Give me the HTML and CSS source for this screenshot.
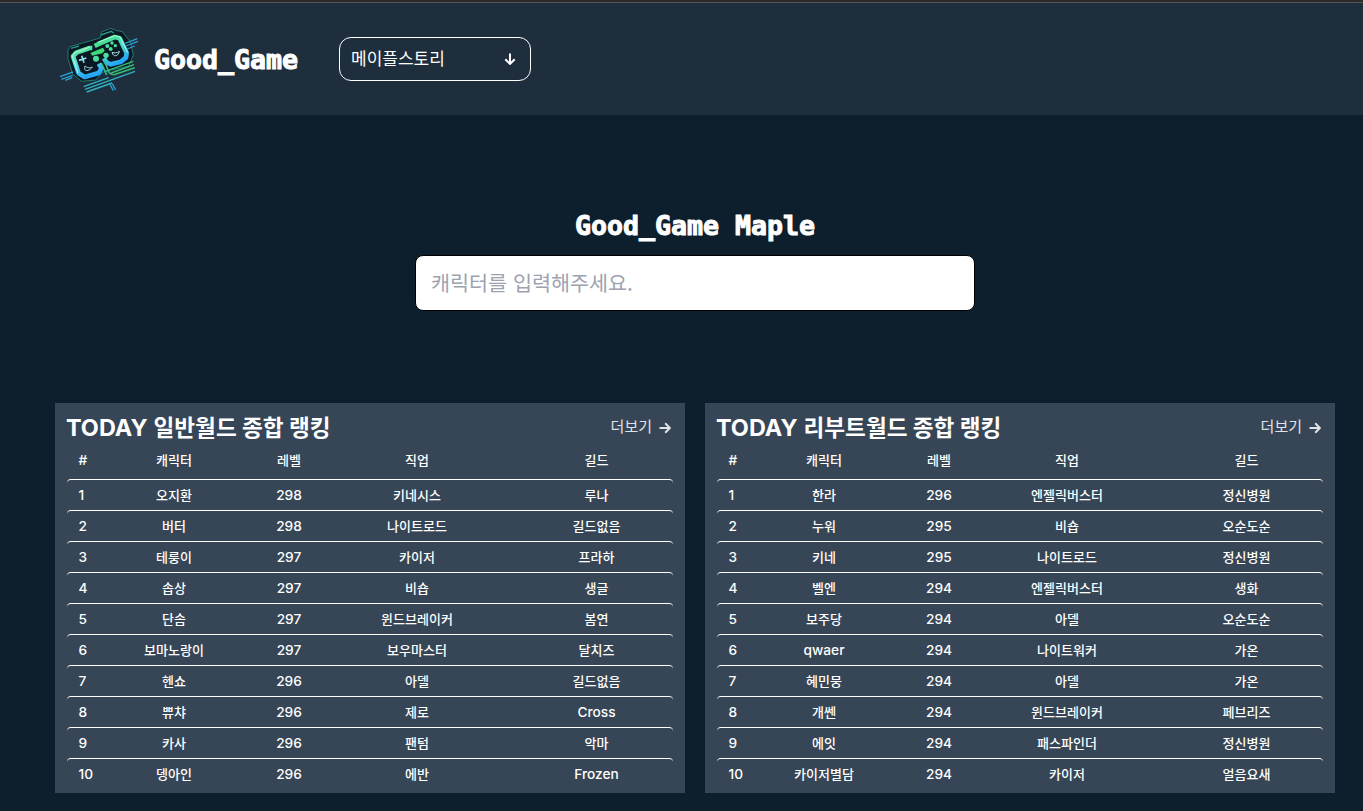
FILE: index.html
```
<!DOCTYPE html>
<html lang="ko">
<head>
<meta charset="utf-8">
<title>Good_Game Maple</title>
<link rel="stylesheet" href="styles.css">
</head>
<body>
<header class="header">
  <svg class="logo" viewBox="0 0 300 240" fill="none">
    <defs>
      <linearGradient id="left" gradientUnits="userSpaceOnUse" x1="90" y1="85" x2="115" y2="170">
        <stop offset="0" stop-color="#55e391"/>
        <stop offset="0.45" stop-color="#5be3dc"/>
        <stop offset="1" stop-color="#23a4fa"/>
      </linearGradient>
      <linearGradient id="right" gradientUnits="userSpaceOnUse" x1="165" y1="50" x2="205" y2="130">
        <stop offset="0" stop-color="#45df7d"/>
        <stop offset="0.5" stop-color="#4be0cc"/>
        <stop offset="1" stop-color="#23a4fa"/>
      </linearGradient>
    </defs>
    <path d="M54 91l6-11 24-7 67-19 3-18 28-11 15 6 20 4 24 31 9 39-14 33-77 18-22 24-42 4-27-22-14-46z" fill="#0b1722" stroke="#237a70" stroke-width="3"/>
    <path d="M63 85l24-7M153 45l31-11 7 5" stroke="#2a9680" stroke-width="4"/>
    <path d="M127 84l-8 0-40 14-10 11 17 51 18 11 42-12 9-14-9-14" stroke="url(#left)" stroke-width="14" stroke-linejoin="round"/>
    <path d="M134 78l14-7 46-20 15 4 21 44-2 14-15 12-30 8-13-5-8-13" stroke="url(#right)" stroke-width="14" stroke-linejoin="round"/>
    <path d="M120 81l-44 16-9 11 17 51M144 67l50-20 16 4 23 46" stroke="#b9f7e6" stroke-width="3"/>
    <path d="M121 99l38-16 5 9-7 8-30 7z" fill="#39db78"/>
    <g fill="#48e09b"><circle cx="138" cy="116" r="9"/><circle cx="168" cy="106" r="8"/><circle cx="172" cy="78" r="6"/><circle cx="186" cy="69" r="5"/><circle cx="182" cy="87" r="6"/><circle cx="196" cy="77" r="5"/></g>
    <path d="M95 107l7 21M87 121l22-7" stroke="#91e3e5" stroke-width="5"/>
    <path d="M105 138c-6 20 13 16 22 3-9 5-15 2-22-3zM186 97c4 16 19 12 22-3-8 5-13 6-22 3z" stroke="#a5dde1" stroke-width="3"/>
    <path d="M154 129l16 36M163 123l15 36 11 5" stroke="#36b98b" stroke-width="5"/>
    <path d="M164 155l86-31M184 159l68-25M190 165l64-22" stroke="#36bd75" stroke-width="4.5"/>
    <path d="M101 200l75-27M105 208l150-54M110 216l76-27" stroke="#2fb3c2" stroke-width="4"/>
    <path d="M30 170l39-14M34 178l34-12M46 181l21-8M226 70l36-14M228 78l36-14M231 87l23-9M180 193l10 19M187 191l10 19" stroke="#2aa1cf" stroke-width="4"/>
  </svg>
  <h1 class="pixel brand">Good_Game</h1>
  <button class="select" type="button"><span>메이플스토리</span>
    <svg width="12" height="12" viewBox="0 0 12 12"><path d="M6 .5v10.2M1.3 6.2L6 10.9l4.7-4.7"/></svg>
  </button>
</header>
<main>
  <section class="search">
    <h2 class="pixel">Good_Game Maple</h2>
    <input class="search-input" placeholder="캐릭터를 입력해주세요.">
  </section>
  <section class="boards" id="boards"></section>
</main>
<script src="ranking.js"></script>
</body>
</html>
```
FILE: styles.css
```
* { box-sizing: border-box; }
body {
  margin: 0;
  min-height: 811px;
  background: #0d1f2d;
  color: #fff;
  font-family: Inter, "Noto Sans CJK KR", sans-serif;
  overflow: hidden;
}
.header {
  height: 115px;
  padding: 20px 0 0 50px;
  display: flex;
  align-items: flex-start;
  background: linear-gradient(#2b2b2b 2px, #555 2px, #555 3px, #1e2e3c 3px);
}
.logo { width: 100px; height: 80px; }
.pixel {
  margin: 0;
  font: bold 26.6px/32px "DejaVu Sans Mono", monospace;
  white-space: pre;
  -webkit-text-stroke: 1px #fff;
}
.brand { margin: 24px 0 0 4px; width: 145px; }
.select {
  margin: 17px 0 0 40px;
  width: 192px;
  height: 44px;
  padding: 0 14px 4px 11px;
  display: flex;
  align-items: center;
  justify-content: space-between;
  border: 1px solid #fff;
  border-radius: 12px;
  background: none;
  color: #fff;
  font: 17px "Noto Sans CJK KR", sans-serif;
}
.select svg, .more svg { fill: none; stroke: currentColor; stroke-width: 2; }
.select svg { margin-top: 4px; }
.search {
  height: 288px;
  padding: 95px 0 0 27px;
  display: flex;
  flex-direction: column;
  align-items: center;
}
.search-input {
  width: 560px;
  height: 56px;
  margin-top: 13px;
  padding: 0 15px 2px;
  border: 1px solid #000;
  border-radius: 8px;
  background: #fff;
  font: 20.7px "Noto Sans CJK KR", sans-serif;
}
.search-input::placeholder { color: #9ca3af; }
.boards { display: flex; gap: 20px; padding-left: 55px; }
.board { width: 630px; height: 390px; flex: none; padding: 8px 12px 0; background: #364656; }
.board-head { height: 32px; display: flex; justify-content: space-between; align-items: center; }
.board-title { margin: 0 0 0 -1px; padding-top: 1px; display: flex; gap: 6px; font-size: 22.6px; line-height: 32px; font-weight: 700; }
.board-title span:first-child { font-size: 23.4px; }
.more { display: flex; align-items: center; gap: 7px; padding: 1px 2px 0 0; color: #e0e3e6; font-size: 15px; line-height: 20px; }
.more span { margin-top: -1px; }
.row {
  height: 31px;
  display: grid;
  grid-template-columns: 40px 134px 96px 160px 176px;
  align-items: center;
  border-top: 1px solid #fff;
  border-radius: 4px;
  font-size: 13px;
  font-weight: 500;
  line-height: 20px;
  text-align: center;
}
.row.labels { height: 36px; padding-bottom: 3px; border: 0; }
.rank { padding-left: 11.5px; text-align: left; }
.guild { padding-left: 23px; }
.latin { font-size: 13.7px; font-weight: 450; }
```
FILE: ranking.js
```
const boards = [
  ["일반월드 종합 랭킹", [
    ["오지환", 298, "키네시스", "루나"], ["버터", 298, "나이트로드", "길드없음"],
    ["테룽이", 297, "카이저", "프라하"], ["솝상", 297, "비숍", "생글"],
    ["단솜", 297, "윈드브레이커", "봄연"], ["보마노랑이", 297, "보우마스터", "달치즈"],
    ["헨쇼", 296, "아델", "길드없음"], ["쀼챠", 296, "제로", "Cross"],
    ["카사", 296, "팬텀", "악마"], ["뎅아인", 296, "에반", "Frozen"]
  ]],
  ["리부트월드 종합 랭킹", [
    ["한라", 296, "엔젤릭버스터", "정신병원"], ["누워", 295, "비숍", "오순도순"],
    ["키네", 295, "나이트로드", "정신병원"], ["벨엔", 294, "엔젤릭버스터", "생화"],
    ["보주당", 294, "아델", "오순도순"], ["qwaer", 294, "나이트워커", "가온"],
    ["혜민뭉", 294, "아델", "가온"], ["개쎈", 294, "윈드브레이커", "페브리즈"],
    ["에잇", 294, "패스파인더", "정신병원"], ["카이저별담", 294, "카이저", "얼음요새"]
  ]]
];
const names = ["rank", "character", "level", "job", "guild"];
const row = (cells, extra = "") => `<div class="row ${extra}">` + cells.map((c, i) =>
  `<span class="${names[i]}${/^[\x00-\x7f]+$/.test(c) ? " latin" : ""}">${c}</span>`).join("") + "</div>";
document.getElementById("boards").innerHTML = boards.map(([title, rows]) => `
  <article class="board">
    <div class="board-head">
      <h3 class="board-title"><span>TODAY</span><span>${title}</span></h3>
      <span class="more"><span>더보기</span><svg width="12" height="12" viewBox="0 0 12 12"><path d="M.5 6h10.2M6.2 1.3L10.9 6l-4.7 4.7"/></svg></span>
    </div>
    ${row(["#", "캐릭터", "레벨", "직업", "길드"], "labels")}
    ${rows.map((r, i) => row([i + 1, ...r])).join("")}
  </article>`).join("");
```
